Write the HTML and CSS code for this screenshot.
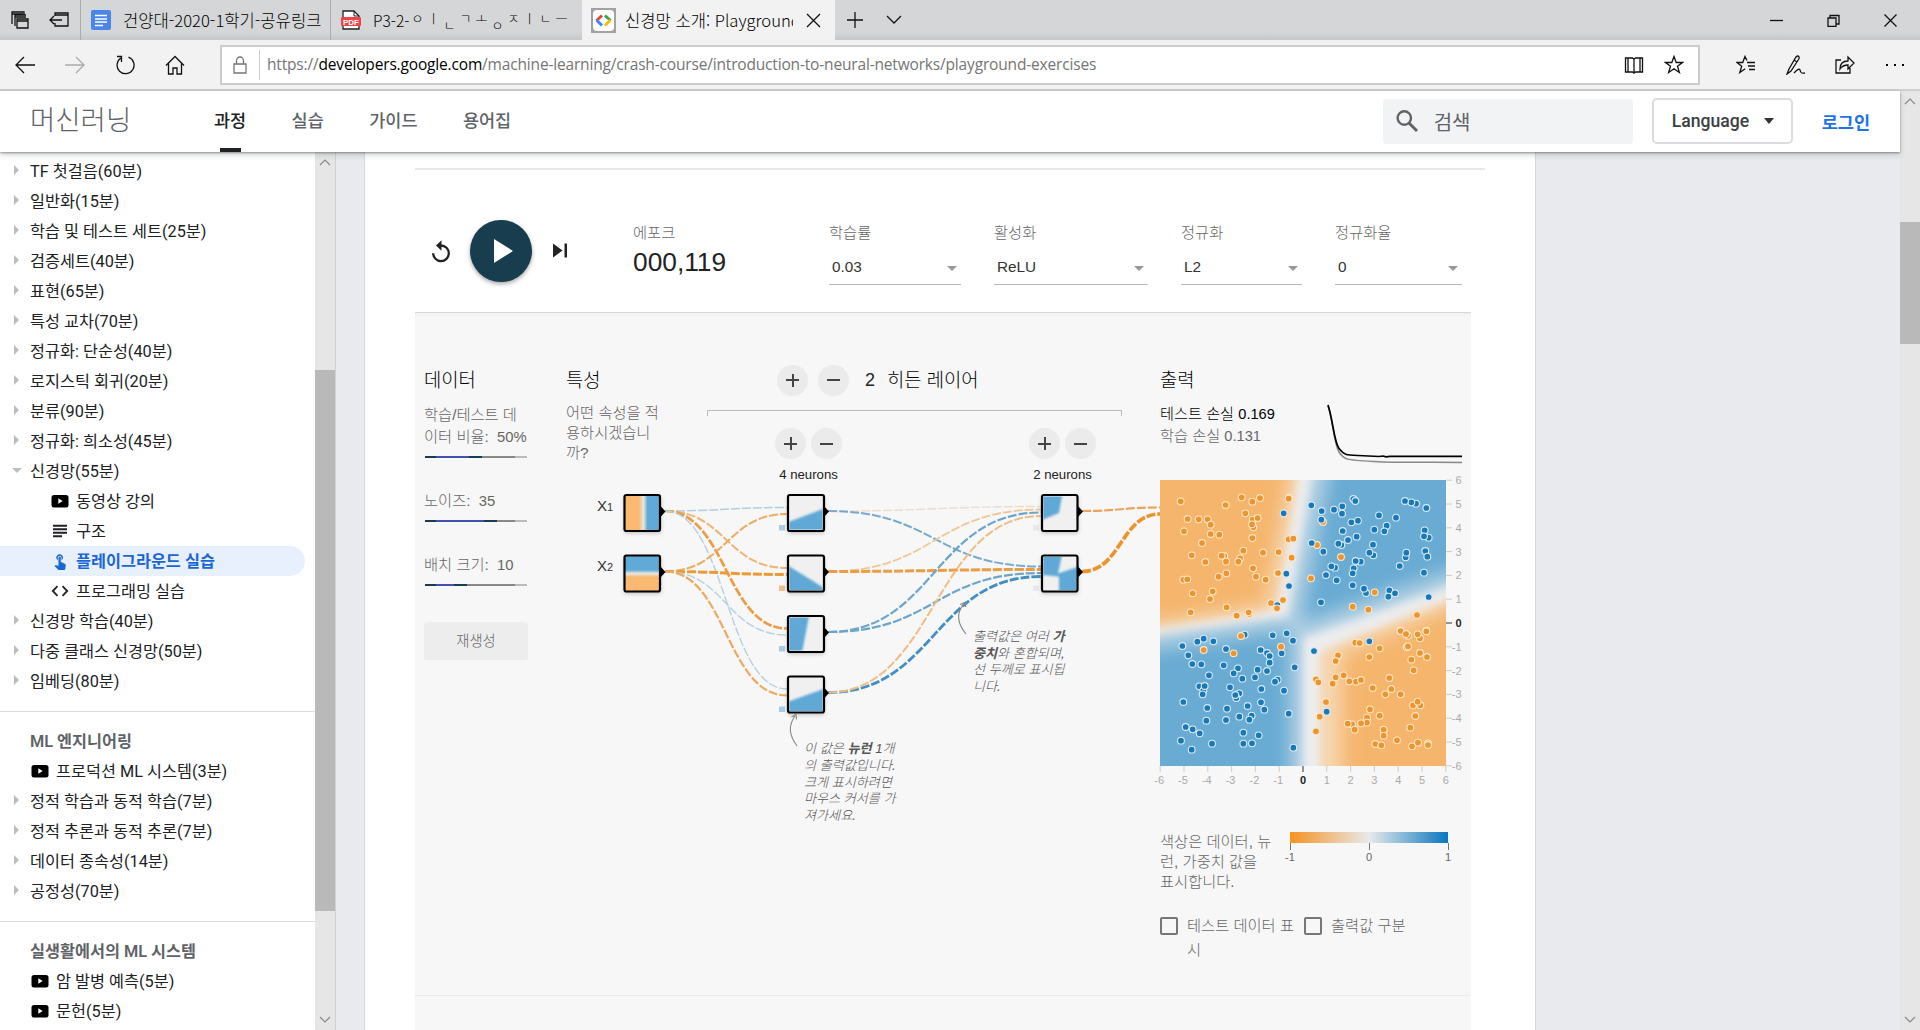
FILE: index.html
```html
<!DOCTYPE html>
<html lang="ko">
<head>
<meta charset="utf-8">
<title>신경망 소개: Playground 실습</title>
<link rel="stylesheet" href="styles.css">
</head>
<body>
<div class="tabbar">
  <div class="tab-tools">
    <svg width="20" height="20" viewBox="0 0 20 20" class="ln"><path d="M2 14V2h12v3M5 16V5h11M7 9h11v9H7zM7 11h11M2 4h11M5 7h11"/></svg>
    <svg width="21" height="20" viewBox="0 0 21 20" class="ln"><path d="M6 6V3h13v13H6v-3M6 5h13M1 10h12M5 6L1 10l4 4"/></svg>
  </div>
  <div class="tab tab-one">
    <svg width="21" height="20" viewBox="0 0 21 20"><rect width="20" height="20" rx="2" fill="#4a86ea"/><path d="M4 5.500h12M4 9h12M4 12h12M4 15.500h8" stroke="#fff" stroke-width="1.7"/></svg>
    <span class="tab-title">건양대-2020-1학기-공유링크</span>
  </div>
  <div class="tab tab-two">
    <svg width="20" height="20" viewBox="0 0 20 20"><path d="M2 19V1h11l5 5v13z" fill="#fff" stroke="#222" stroke-width="1.300"/><path d="M13 1v5h5" fill="none" stroke="#222"/><rect y="7" width="20" height="9" rx="1" fill="#ef4447"/><text x="10" y="14.500" text-anchor="middle" class="pdf">PDF</text></svg>
    <span class="tab-title jamo">P3-2-<i>&#x3147;</i><i>&#x3163;</i><b>&#x3134;</b><i>&#x3131;</i><i>&#x3157;</i><b>&#x3147;</b><i>&#x3148;</i><i>&#x3163;</i><i>&#x3134;</i><i>&#x3161;</i></span>
  </div>
  <div class="tab tab-active">
    <svg width="25" height="25" viewBox="0 0 25 25"><rect width="25" height="25" fill="#a0a2a5"/><rect x="2" y="2" width="21" height="21" rx="4" fill="#fff"/><g fill="none" stroke-width="3"><path d="M11 7.500L5.500 12.500" stroke="#ea4335"/><path d="M5.500 12L11 17.500" stroke="#4285f4"/><path d="M14 7.500l5.500 5" stroke="#34a853"/><path d="M19.500 12L14 17.500" stroke="#fbbc05"/></g></svg>
    <span class="tab-title">신경망 소개: Playground</span>
    <svg width="15" height="15" viewBox="0 0 15 15" class="ln"><path d="M1 1l13 13M14 1L1 14"/></svg>
  </div>
  <div class="tab-new">
    <svg width="16" height="16" viewBox="0 0 16 16" class="ln"><path d="M8 0v16M0 8h16"/></svg>
    <svg width="16" height="10" viewBox="0 0 16 10" class="ln"><path d="M1 1l7 7 7-7"/></svg>
  </div>
  <div class="window-buttons">
    <svg width="13" height="13" viewBox="0 0 13 13" class="ln"><path d="M0 6.500h13"/></svg>
    <svg width="13" height="13" viewBox="0 0 13 13" class="ln"><path d="M1 4h8v8.500H1zM3 4V1.500h9V10H9"/></svg>
    <svg width="13" height="13" viewBox="0 0 13 13" class="ln"><path d="M.5.5l12 12M12.500.5l-12 12"/></svg>
  </div>
</div>
<div class="toolbar">
  <div class="nav-icons">
    <svg width="20" height="18" viewBox="0 0 20 18" class="ln"><path d="M20 9H1M9 1L1 9l8 8"/></svg>
    <svg width="20" height="18" viewBox="0 0 20 18" class="ln faded"><path d="M0 9h19M11 1l8 8-8 8"/></svg>
    <svg width="20" height="20" viewBox="0 0 20 20" class="ln"><path d="M12.500 2.200A8.500 8.500 0 1 1 5 3M5.500 7V1.500H1" transform="translate(1 0)"/></svg>
    <svg width="20" height="20" viewBox="0 0 20 20" class="ln"><path d="M1 10.500L10 1.500l9 9M3.500 8.500V19H8v-6h4v6h4.500V8.500"/></svg>
  </div>
  <div class="address">
    <svg width="14" height="18" viewBox="0 0 14 18" class="ln gray"><path d="M1 8h12v9H1zM3.500 8V5a3.500 4 0 0 1 7 0v3"/></svg>
    <span class="url">https://<em>developers.google.com</em>/machine-learning/crash-course/introduction-to-neural-networks/playground-exercises</span>
    <svg width="20" height="18" viewBox="0 0 20 18" class="ln"><path d="M10 2v14M1.500 2H8.500L10 3.200 11.500 2h7v14h-7L10 17.200 8.500 16h-7zM4 2v14M16 2v14"/></svg>
    <svg width="20" height="19" viewBox="0 0 20 19" class="ln"><path d="M10 1.500l2.200 6h6.300l-5 3.800 1.900 6.200-5.400-3.800-5.400 3.800 1.900-6.200-5-3.800h6.300z"/></svg>
  </div>
  <div class="right-icons">
    <svg width="20" height="19" viewBox="0 0 20 19" class="ln"><path d="M11 7.500h8M12 11h7M13 14.500h6M11 5.500l-2-4-2.300 6H1l4.700 3.800-1.900 6.200 5.400-3.800"/></svg>
    <svg width="20" height="20" viewBox="0 0 20 20" class="ln"><path d="M1 19l2-5L10 2q2-2 3 0 .5 1-.5 2.500L5 16l-4 3zM8 5l3 2M8 18c3-3 5-5 6-3s0 4 5 3"/></svg>
    <svg width="20" height="20" viewBox="0 0 20 20" class="ln"><path d="M6 5H1v13h14v-5M5 14c0-5 3-8 8-8V2l6 6-6 6v-4c-4 0-6 1-8 4z"/></svg>
    <svg width="20" height="4" viewBox="0 0 20 4"><path d="M1 1h2v2H1zM9 1h2v2H9zM17 1h2v2h-2z"/></svg>
  </div>
</div>
<div class="viewport">
  <div class="page">
    <header class="site-header">
      <div class="brand">머신러닝</div>
      <nav class="site-nav"><a class="on">과정</a><a>실습</a><a>가이드</a><a>용어집</a></nav>
      <div class="search"><svg width="24" height="24" viewBox="0 0 24 24"><circle cx="9.300" cy="9" r="6.700" fill="none" stroke="#5f6368" stroke-width="2.400"/><path d="M14 14l8 8" stroke="#5f6368" stroke-width="3"/></svg>검색</div>
      <div class="language">Language<i class="caret"></i></div>
      <a class="login">로그인</a>
    </header>
    <div class="body">
      <aside class="sidebar">
        <div class="toc">
          <ul>
            <li class="item">TF 첫걸음(60분)</li><li class="item">일반화(15분)</li><li class="item">학습 및 테스트 세트(25분)</li><li class="item">검증세트(40분)</li><li class="item">표현(65분)</li><li class="item">특성 교차(70분)</li><li class="item">정규화: 단순성(40분)</li><li class="item">로지스틱 회귀(20분)</li><li class="item">분류(90분)</li><li class="item">정규화: 희소성(45분)</li>
            <li class="item open">신경망(55분)</li>
            <li class="sub"><svg width="18" height="18" viewBox="0 0 18 18"><rect x=".5" y="3" width="17" height="12.500" rx="2.500"/><path d="M7.300 6.300l4.400 2.700-4.400 2.700z" fill="#fff"/></svg>동영상 강의</li>
            <li class="sub"><svg width="18" height="18" viewBox="0 0 18 18"><path d="M2 3.800h14M2 7.300h14M2 10.800h14M2 14.300h9" stroke="#202124" stroke-width="2"/></svg>구조</li>
            <li class="sub current"><svg width="18" height="18" viewBox="0 0 24 24"><path fill="#1967d2" d="M9 11.240V7.500a2.500 2.500 0 0 1 5 0v3.740A4.500 4.500 0 1 0 9 11.240zm9.840 4.630l-4.540-2.260c-.17-.07-.35-.11-.54-.11H13v-6a1.500 1.500 0 0 0-3 0v10.740l-3.430-.72c-.45-.07-.8.1-1.030.31l-.79.800 4.940 4.940c.27.27.65.44 1.060.44h6.790c.75 0 1.330-.55 1.440-1.280l.75-5.270c.1-.66-.28-1.320-.89-1.590z"/></svg>플레이그라운드 실습</li>
            <li class="sub"><svg width="18" height="18" viewBox="0 0 18 18"><path d="M6.500 4.200L1.800 9l4.700 4.800M11.500 4.200L16.200 9l-4.700 4.800" fill="none" stroke="#202124" stroke-width="1.800"/></svg>프로그래밍 실습</li>
            <li class="item">신경망 학습(40분)</li><li class="item">다중 클래스 신경망(50분)</li><li class="item">임베딩(80분)</li>
          </ul>
          <ul>
            <li class="heading">ML 엔지니어링</li>
            <li class="sub video"><svg width="18" height="18" viewBox="0 0 18 18"><rect x=".5" y="3" width="17" height="12.500" rx="2.500"/><path d="M7.300 6.300l4.400 2.700-4.400 2.700z" fill="#fff"/></svg>프로덕션 ML 시스템(3분)</li>
            <li class="item">정적 학습과 동적 학습(7분)</li><li class="item">정적 추론과 동적 추론(7분)</li><li class="item">데이터 종속성(14분)</li><li class="item">공정성(70분)</li>
          </ul>
          <ul>
            <li class="heading">실생활에서의 ML 시스템</li>
            <li class="sub video"><svg width="18" height="18" viewBox="0 0 18 18"><rect x=".5" y="3" width="17" height="12.500" rx="2.500"/><path d="M7.300 6.300l4.400 2.700-4.400 2.700z" fill="#fff"/></svg>암 발병 예측(5분)</li>
            <li class="sub video"><svg width="18" height="18" viewBox="0 0 18 18"><rect x=".5" y="3" width="17" height="12.500" rx="2.500"/><path d="M7.300 6.300l4.400 2.700-4.400 2.700z" fill="#fff"/></svg>문헌(5분)</li>
          </ul>
        </div>
        <div class="scrollbar side-scroll">
          <svg width="12" height="8" viewBox="0 0 12 8"><path d="M1 7l5-5 5 5"/></svg>
          <i class="thumb"></i>
          <svg width="12" height="8" viewBox="0 0 12 8"><path d="M1 1l5 5 5-5"/></svg>
        </div>
      </aside>
      <main class="article">
        <hr class="rule">
        <section class="controls">
          <div class="run-buttons">
            <svg width="20" height="24" viewBox="0 0 20 24"><path d="M2.200 14.200a7.800 7.800 0 1 0 7.800-7.700" fill="none" stroke="#222" stroke-width="2.300"/><path d="M10.500 1.300v10.400L5 6.500z" fill="#222"/></svg>
            <div class="play"><svg width="20" height="26" viewBox="0 0 20 26"><path d="M0 1l19 12L0 25z" fill="#fff"/></svg></div>
            <svg width="15" height="15" viewBox="0 0 15 15"><path d="M0 .5v14L9.500 7.500zM11.500.5h2.500v14h-2.500z" fill="#222"/></svg>
          </div>
          <div class="epoch"><label>에포크</label><span>000,119</span></div>
          <div class="field rate"><label>학습률</label><div class="select">0.03</div></div>
          <div class="field act"><label>활성화</label><div class="select">ReLU</div></div>
          <div class="field reg"><label>정규화</label><div class="select">L2</div></div>
          <div class="field regrate"><label>정규화율</label><div class="select">0</div></div>
        </section>
        <section class="workspace">
          <div class="data-col">
            <h4>데이터</h4>
            <p>학습/테스트 데<br>이터 비율: <span>50%</span></p><div class="slider s50"></div>
            <p>노이즈: <span>35</span></p><div class="slider s35"></div>
            <p>배치 크기: <span>10</span></p><div class="slider s10"></div>
            <div class="regen">재생성</div>
          </div>
          <div class="network">
            <div class="net-head">
              <div class="features"><h4>특성</h4><p>어떤 속성을 적<br>용하시겠습니<br>까?</p></div>
              <div class="hidden-layers">
                <div class="layer-count"><i class="round plus"></i><i class="round"></i><span class="num">2</span><span class="caption">히든 레이어</span></div>
                <div class="bracket"></div>
                <div class="neuron-row">
                  <div class="neurons"><div><i class="round plus"></i><i class="round"></i></div>4 neurons</div>
                  <div class="neurons"><div><i class="round plus"></i><i class="round"></i></div>2 neurons</div>
                </div>
              </div>
            </div>
            <svg class="canvas" width="594" height="360" viewBox="566 485 594 360">
              <defs>
                <clipPath id="cell"><rect x="1.500" y="1.500" width="33" height="33"/></clipPath>
                <filter id="soft" x="-30%" y="-30%" width="160%" height="160%"><feGaussianBlur stdDeviation="1.300"/></filter>
                <filter id="drop" x="-30%" y="-30%" width="160%" height="170%"><feDropShadow dx="0" dy="2" stdDeviation="2" flood-opacity=".25"/></filter>
                <linearGradient id="gx"><stop offset=".4" stop-color="#f9b970"/><stop offset=".53" stop-color="#e8e6e0"/><stop offset=".64" stop-color="#61a9d6"/></linearGradient>
                <linearGradient id="gy" x2="0" y2="1"><stop offset=".4" stop-color="#61a9d6"/><stop offset=".5" stop-color="#e8e6e0"/><stop offset=".6" stop-color="#f9b970"/></linearGradient>
              </defs>
              <g class="links" id="links"></g>
              <g class="biases"><path d="M779 525h6v5.500h-6zM779 646h6v5.500h-6zM779 706.500h6v5.500h-6z" fill="#a9cce3"/><path d="M779 585.500h6v5.500h-6z" fill="#edc08b"/><path d="M1033 525h6v5.500h-6zM1033 585.500h6v5.500h-6z" fill="#e5e8ec"/></g>
              <g id="nodes">
                <g transform="translate(624.500 495)"><rect class="back" width="36" height="36"/><rect width="36" height="36" fill="url(#gx)"/><rect class="frame" width="35.500" height="36" rx="2"/><path d="M36 11l5 5.500-5 5.500z"/></g>
                <g transform="translate(624.500 555.500)"><rect class="back" width="36" height="36"/><rect width="36" height="36" fill="url(#gy)"/><rect class="frame" width="35.500" height="36" rx="2"/><path d="M36 11l5 5.500-5 5.500z"/></g>
                <g transform="translate(788 495)"><rect class="back" width="36" height="36"/><g clip-path="url(#cell)"><path class="blue" d="M-5 29L40 12V42H-5z"/></g><rect class="frame" width="36" height="36" rx="2"/><path d="M36 11l5 5.500-5 5.500z"/></g>
                <g transform="translate(788 555.500)"><rect class="back" width="36" height="36"/><g clip-path="url(#cell)"><path class="blue" d="M-5 7L42 36V42H-5z"/></g><rect class="frame" width="36" height="36" rx="2"/><path d="M36 11l5 5.500-5 5.500z"/></g>
                <g transform="translate(788 616)"><rect class="back" width="36" height="36"/><g clip-path="url(#cell)"><path class="blue" d="M-5-5H22L13 42H-5z"/></g><rect class="frame" width="36" height="36" rx="2"/><path d="M36 11l5 5.500-5 5.500z"/></g>
                <g transform="translate(788 676.500)"><rect class="back" width="36" height="36"/><g clip-path="url(#cell)"><path class="blue" d="M-5 27L40 11V42H-5z"/></g><rect class="frame" width="36" height="36" rx="2"/><path d="M36 11l5 5.500-5 5.500z"/></g>
                <g transform="translate(1042 495)"><rect class="back" width="36" height="36"/><g clip-path="url(#cell)"><path class="blue" d="M-5-5H21L17 18-5 27z"/></g><rect class="frame" width="35.500" height="36" rx="2"/><path d="M36 11l5 5.500-5 5.500z"/></g>
                <g transform="translate(1042 555.500)"><rect class="back" width="36" height="36"/><g clip-path="url(#cell)"><path class="blue" d="M-5-5H21L16 18 40 10V42H17V21L-5 19z"/></g><rect class="frame" width="35.500" height="36" rx="2"/><path d="M36 11l5 5.500-5 5.500z"/></g>
              </g>
              <g class="xlab"><text x="597" y="511">X<tspan class="subn">1</tspan></text><text x="597" y="571">X<tspan class="subn">2</tspan></text></g>
              <g class="pointer"><path d="M966 634C957 623 956 613 964 604M960 604.500l5.500-2.500v5"/><path d="M797 746C789 735 788 726 795 716M791.500 717l4.500-2.500.5 5"/></g>
              <g class="note"><text x="973" y="641">출력값은 여러 <tspan class="hv">가</tspan></text><text x="973" y="657.500"><tspan class="hv">중치</tspan>와 혼합되며,</text><text x="973" y="674">선 두께로 표시됩</text><text x="973" y="690.500">니다.</text>
              <text x="804" y="753">이 값은 <tspan class="hv">뉴런</tspan> 1개</text><text x="804" y="770">의 출력값입니다.</text><text x="804" y="786.500">크게 표시하려면</text><text x="804" y="803">마우스 커서를 가</text><text x="804" y="820">져가세요.</text></g>
            </svg>
          </div>
          <div class="output">
            <h4>출력</h4>
            <div class="loss">
              <div><b>테스트 손실 <span>0.169</span></b><br>학습 손실 <span>0.131</span></div>
              <svg width="138" height="64" viewBox="0 0 138 64"><path d="M4 4C9 18 10 42 15 50S22 58 50 59.500 100 60 138 60.500" fill="none" stroke="#888" stroke-width="1.500"/><path d="M4 3C9 18 10 40 15 46.500S22 53 34 53.500L55 54.500l4-.5 3 .8 4-.5H138" fill="none" stroke="#000" stroke-width="1.700"/></svg>
            </div>
            <svg class="heatmap" width="311" height="310" viewBox="0 0 311 310">
              <defs><clipPath id="plot"><rect width="286" height="286"/></clipPath>
              <filter id="b4" x="-20%" y="-20%" width="140%" height="140%"><feGaussianBlur stdDeviation="4"/></filter><filter id="b10" x="-20%" y="-20%" width="140%" height="140%"><feGaussianBlur stdDeviation="9"/></filter></defs>
              <g clip-path="url(#plot)">
                <rect width="286" height="286" fill="#69abd3"/>
                <g filter="url(#b10)" fill="#c3d9e6" stroke="#b5d2e4" stroke-width="36"><path d="M-40-40H157L124 131-40 156z"/><path d="M330 96L148 160V330H330z"/></g>
                <g filter="url(#b4)" fill="#eeeceb" stroke="#ecedef" stroke-width="14"><path d="M-40-40H151L122 130-40 153z"/><path d="M330 99L150 163V330H330z"/></g>
                <g filter="url(#b4)" fill="#f6d6b0"><path d="M-40-40H142L117 128-40 150z"/><path d="M330 106L160 172V330H330z"/></g>
                <g filter="url(#b10)" fill="#f5b56d"><path d="M-40-40H134L106 124-40 148z"/><path d="M330 112L182 174V330H330z"/></g>
              </g>
              <g id="points" stroke-width="1.100"></g>
              <g id="axes"></g>
            </svg>
            <div class="legend">
              <p>색상은 데이터, 뉴<br>런, 가중치 값을<br>표시합니다.</p>
              <div class="scale"><div class="bar"></div><div class="marks"><span>-1</span><span>0</span><span>1</span></div></div>
            </div>
            <div class="checks"><i></i><p>테스트 데이터 표<br>시</p><i></i><p>출력값 구분</p></div>
          </div>
        </section>
        <div class="below"></div>
      </main>
    </div>
  </div>
  <div class="scrollbar main-scroll">
    <svg width="12" height="8" viewBox="0 0 12 8"><path d="M1 7l5-5 5 5"/></svg>
    <i class="thumb"></i>
    <svg width="12" height="8" viewBox="0 0 12 8"><path d="M1 1l5 5 5-5"/></svg>
  </div>
</div>
<script src="playground.js"></script>
</body>
</html>
```
FILE: styles.css
```css
* { box-sizing: border-box; }
body { margin: 0; width: 1920px; height: 1030px; overflow: hidden; font-family: Roboto, "Noto Sans CJK KR", sans-serif; font-size: 16px; color: #202124; display: flex; flex-direction: column; }
ul { list-style: none; margin: 0; padding: 0; }
h4, p { margin: 0; font-weight: 300; }
svg { display: block; flex: none; }
.ln { fill: none; stroke: #111; stroke-width: 1.3; }
.ln.gray { stroke: #777; }
.ln.faded { stroke: #aaa; }

.tabbar { height: 40px; background: linear-gradient(#d4d6d8 80%, #c5c7c9); display: flex; font-family: "Noto Sans CJK KR", sans-serif; flex: none; }
.tab-tools { width: 81px; display: flex; gap: 19px; padding: 0 0 0 10px; align-items: center; border-right: 1px solid #aaacae; }
.tab { display: flex; align-items: center; overflow: hidden; font-size: 16.6px; padding-left: 10px; }
.tab-title { flex: 1; white-space: nowrap; overflow: hidden; font-weight: 300; color: #000; }
.tab-one { width: 250px; gap: 11px; border-right: 1px solid #aaacae; padding-right: 9px; }
.tab-two { width: 251px; gap: 12px; padding-right: 5px; }
.pdf { font: bold 8px "Liberation Sans", sans-serif; fill: #fff; }
.jamo { font-size: 15.5px; line-height: 34px; }
.jamo i, .jamo b { display: inline-block; width: 16px; text-align: center; font-style: normal; font-weight: 300; font-size: 13px; line-height: 16px; }
.jamo i { vertical-align: 4px; }
.jamo b { vertical-align: -3px; }
.tab-active { width: 253px; background: #f2f2f2; padding: 0 14px 0 9px; gap: 9px; }
.tab-active .tab-title { margin-right: 4px; }
.tab-new { display: flex; align-items: center; gap: 23px; padding-left: 12px; flex: 1; }
.window-buttons { display: flex; align-items: center; gap: 44px; padding-right: 23px; }

.toolbar { height: 51px; background: #f2f2f2; border-bottom: 2px solid #cfcfcf; display: flex; align-items: center; flex: none; }
.nav-icons { width: 220px; display: flex; gap: 30px; padding-left: 15px; align-items: center; }
.address { width: 1480px; height: 40px; border: 2px solid #ccc; background: #fff; display: flex; align-items: center; padding: 0 14px 0 11px; }
.url { flex: 1; height: 30px; line-height: 28px; margin-left: 12px; border-left: 1px solid #ccc; padding-left: 7px; font-family: "Open Sans", sans-serif; font-size: 15.5px; letter-spacing: -0.17px; color: #757575; white-space: nowrap; }
.url em { font-style: normal; color: #000; }
.address svg:last-child { margin-left: 20px; }
.right-icons { display: flex; align-items: center; gap: 29.5px; padding-left: 36px; }

.viewport { flex: 1; display: flex; min-height: 0; }
.page { width: 1900px; display: flex; flex-direction: column; min-height: 0; }
.site-header { height: 61px; flex: none; display: flex; align-items: center; background: #fff; position: relative; z-index: 2; box-shadow: 0 1px 2px rgba(60,64,67,.5), 0 3px 6px rgba(60,64,67,.2); padding: 0 0 1px 30px; }
.brand { width: 184px; font-size: 27.5px; color: #5f6368; font-weight: 300; line-height: 58px; }
.site-nav { flex: 1; display: flex; gap: 45.4px; font-size: 17.5px; font-weight: 500; color: #5f6368; }
.site-nav a { height: 61px; line-height: 60px; margin-bottom: -1px; }
.site-nav .on { color: #202124; background: linear-gradient(#202124, #202124) 6px 57px / 21px 4px no-repeat; }
.search { width: 250px; height: 45px; background: #f1f3f4; border-radius: 4px; display: flex; align-items: center; gap: 15px; padding-left: 12px; font-size: 20px; color: #5f6368; }
.language { width: 141px; height: 46px; border: 2px solid #dadce0; border-radius: 5px; margin-left: 19px; display: flex; align-items: center; padding-left: 18px; font-weight: 500; font-size: 17.6px; color: #3c4043; }
.caret { border: 5px solid transparent; border-top: 6px solid #333; border-bottom: 0; margin-left: 15px; }
.login { color: #1a73e8; font-weight: 600; font-size: 17.5px; margin: 0 30px 0 29px; }

.body { flex: 1; display: flex; background: #e8eaed; min-height: 0; }
.sidebar { width: 336px; display: flex; overflow: hidden; border-right: 1px solid #cfd1d4; }
.toc { width: 315px; background: #fff; padding-top: 4px; height: 878px; overflow: hidden; font-size: 16.3px; }
.toc ul + ul { border-top: 1px solid #dadce0; margin-top: 15px; padding-top: 14px; }
.toc li { height: 30px; line-height: 31px; padding-left: 30px; white-space: nowrap; position: relative; display: flex; align-items: center; }
.item::before { content: ""; position: absolute; left: 14px; top: 9px; border: 5.5px solid transparent; border-left-color: #bdbdbd; border-right: 0; }
.item.open::before { left: 12px; top: 12px; border: 5px solid transparent; border-top-color: #bdbdbd; border-bottom: 0; }
.toc .sub { padding-left: 51px; gap: 7px; }
.toc .video { padding-left: 31px; }
.toc .current { background: #e8f0fe; color: #1967d2; width: 305px; border-radius: 0 15px 15px 0; font-weight: 600; }
.toc .heading { color: #5f6368; font-weight: 600; }
.scrollbar { width: 20px; background: #e6e6e6; display: flex; flex-direction: column; align-items: center; }
.scrollbar path { fill: none; stroke: #888; stroke-width: 1.2; }
.thumb { width: 100%; background: #b9b9b9; }
.side-scroll { padding: 6px 0; }
.side-scroll .thumb { height: 541px; margin: 204px 0 105px; }
.main-scroll { padding: 6px 0; }
.main-scroll .thumb { height: 123px; margin: 117px 0 672px; }

.article { margin-left: 28px; width: 1172px; background: #fff; border: solid #d5d7da; border-width: 0 1px; padding: 16px 50px 0 50px; overflow: hidden; }
.rule { border: 0; height: 2px; background: #e8e8e8; margin: 0; }
.controls { height: 142px; display: flex; padding: 50px 0 0 16px; font-family: "Liberation Sans", "Noto Sans CJK KR", sans-serif; }
.run-buttons { display: flex; align-items: center; height: 61px; width: 202px; gap: 19px; }
.run-buttons > svg:last-child { margin-left: 2px; }
.play { width: 62px; height: 62px; border-radius: 50%; background: #183d4e; display: flex; align-items: center; justify-content: center; padding-left: 5px; box-shadow: 0 2px 4px rgba(0,0,0,.35); }
label { display: block; font-size: 15.3px; line-height: 22px; padding-top: 2px; color: #666; font-weight: 300; }
.epoch { width: 196px; color: #222; }
.epoch span { font-size: 26.3px; line-height: 36px; }
.field { margin-right: 33px; }
.select { height: 41px; line-height: 46px; padding: 0 0 0 3px; border-bottom: 1px solid #bbb; font-size: 15.3px; color: #333; display: flex; justify-content: space-between; }
.select::after { content: ""; border: 5px solid transparent; border-top-color: #999; border-bottom: 0; margin: 22px 4px 0 0; }
.rate { width: 132px; } .act { width: 154px; } .reg { width: 121px; } .regrate { width: 127px; margin: 0; }

.workspace { width: 1056px; height: 683px; background: linear-gradient(#f1f1f1, #f7f7f7 4px); border: solid #d8d8d8; border-width: 1px 0 0; display: flex; font-family: "Liberation Sans", "Noto Sans CJK KR", sans-serif; }
.below { width: 1056px; height: 60px; background: #f7f7f7; border-top: 1px solid #e9e9e9; }
.workspace h4 { font-size: 18.8px; line-height: 30px; padding-top: 53px; color: #000; }
.workspace p { font-size: 15.3px; color: #666; }
.data-col { width: 151px; padding: 0 37px 0 9px; }
.data-col p { line-height: 22px; margin-top: 8px; white-space: nowrap; }
.data-col .slider + p { margin-top: 32px; }
.data-col p span { margin-left: 4px; font-size: 14.8px; }
.slider { width: 102px; height: 2px; margin: 8px 0 0 1px; }
.s50 { background: linear-gradient(90deg, #183d4e 11px, #4350af 11px 44px, #183d4e 44px 57px, #888 57px 90px, #bbb 90px); }
.s35 { background: linear-gradient(90deg, #183d4e 11px, #4350af 11px 59px, #183d4e 59px 72px, #888 72px 90px, #bbb 90px); }
.s10 { background: linear-gradient(90deg, #183d4e 11px, #4350af 11px 29px, #183d4e 29px 42px, #888 42px 90px, #bbb 90px); }
.regen { margin: 36px 0 0; width: 104px; height: 38px; border-radius: 3px; background: #ededed; color: #666; font-size: 14.3px; font-weight: 300; line-height: 38px; text-align: center; }
.network { width: 594px; }
.net-head { height: 172px; display: flex; }
.features { width: 141px; }
.features p { line-height: 20px; margin-top: 7px; white-space: nowrap; }
.hidden-layers { width: 415px; }
.layer-count { display: flex; align-items: center; height: 30px; margin: 52px 0 0 70px; gap: 10px; font-size: 18.8px; font-weight: 300; color: #000; }
.layer-count .num { margin: 0 3px 0 6px; font-size: 18px; font-weight: 400; color: #222; }
.layer-count .caption { padding-bottom: 4px; margin-left: -1px; }
.round { width: 31px; height: 31px; border-radius: 50%; flex: none; background: linear-gradient(#444, #444) center / 13px 2px no-repeat, #ebebeb; }
.round.plus { background: linear-gradient(#444, #444) center / 13px 2px no-repeat, linear-gradient(#444, #444) center / 2px 13px no-repeat, #ebebeb; }
.bracket { height: 6px; margin-top: 15px; border: 1px solid #bbb; border-bottom: 0; }
.neuron-row { display: flex; justify-content: space-between; padding: 12px 26px 0 68px; }
.neurons { font-size: 13.2px; color: #222; text-align: center; line-height: 31px; white-space: nowrap; }
.neurons div { display: flex; gap: 5px; }
.canvas .links path { fill: none; stroke-dasharray: 9 2; }
.back { fill: #f0f0f0; filter: url(#drop); }
.frame { fill: none; stroke: #000; stroke-width: 2.2; }
.blue { fill: #61a9d6; filter: url(#soft); }
.xlab { font-size: 15px; fill: #333; }
.subn { font-size: 11px; }
.pointer { fill: none; stroke: #888; stroke-width: 1.1; }
.note { font-size: 13.1px; font-style: italic; font-weight: 300; fill: #555; }
.hv { font-weight: 600; }
.output { width: 311px; }
.loss { display: flex; justify-content: space-between; height: 72px; font-size: 15.2px; line-height: 22px; color: #666; font-weight: 300; padding-top: 7px; white-space: nowrap; }
.loss b { color: #000; font-weight: 300; }
.loss span { font-size: 14.6px; }
.loss svg { margin-right: 9px; margin-top: -1px; width: 138px; }
.heatmap { margin-top: 12px; font-size: 11px; fill: #aaa; overflow: visible; }
.legend { display: flex; height: 60px; margin-top: 42px; }
.legend p { line-height: 20px; width: 124px; white-space: nowrap; }
.scale { width: 170px; }
.bar { width: 158px; height: 11px; margin-left: 6px; background: linear-gradient(90deg, #f59322, #e8eaeb 50%, #0877bd); }
.marks { display: flex; justify-content: space-between; font-size: 11px; color: #666; }
.marks span { width: 12px; text-align: center; padding-top: 8px; background: linear-gradient(#777, #777) top center / 1px 7px no-repeat; }
.checks { display: flex; margin-top: 22px; width: 311px; }
.checks p { line-height: 24px; font-size: 15.3px; white-space: nowrap; }
.checks i { width: 18px; height: 18px; border: 2px solid #777; border-radius: 2px; margin: 3px 9px 0 0; flex: none; }
.checks p + i { margin-left: 10px; }
```
FILE: playground.js
```js
const NS = "http://www.w3.org/2000/svg";
function add(parent, tag, attrs, text) {
  const el = document.createElementNS(NS, tag);
  for (const k in attrs) el.setAttribute(k, attrs[k]);
  if (text !== undefined) el.textContent = text;
  parent.appendChild(el);
}

// Weighted connections: x0, y0, x1, y1, colour, width
[
  [665, 511, 787, 507.5, "#b0cfe2", 1.5], [665, 511, 787, 568, "#edb473", 2],
  [665, 511, 787, 628.5, "#ec9c42", 2.7], [665, 511, 787, 689, "#b4d0e1", 1.4],
  [665, 571.5, 787, 514, "#edac63", 2.1], [665, 571.5, 787, 574.5, "#ec9936", 3],
  [665, 571.5, 787, 635, "#b4d0e1", 1.4], [665, 571.5, 787, 695.5, "#ecaa60", 2.2],
  [828, 511, 1041, 506.5, "#ecdccb", 1.4], [828, 511, 1041, 566.5, "#78aacd", 2],
  [828, 571.5, 1041, 509.5, "#efc797", 1.8], [828, 571.5, 1041, 569.5, "#ec9c42", 3],
  [828, 632, 1041, 512.5, "#6ca5cb", 2.2], [828, 632, 1041, 573, "#6ca5cb", 2.2],
  [828, 692.5, 1041, 576.5, "#438fc4", 2.8], [828, 692.5, 1041, 516, "#efbd82", 2],
  [1082, 511, 1160, 507.5, "#eba55b", 2.2], [1082, 571.5, 1160, 514, "#ec932b", 3.7]
].forEach(([a, b, c, d, color, w]) => {
  const m = (a + c) / 2;
  add(document.getElementById("links"), "path", { d: `M${a} ${b}C${m} ${b} ${m} ${d} ${c} ${d}`, stroke: color, "stroke-width": w });
});

// Samples grouped by quadrant: offset, then x,y pairs in thirds of a pixel
const O = "#ec9430", B = "#1878b8";
const samples = [
  [-10, -10, O, "92,94 227,105 275,82 330,84 307,95 418,83 416,86 286,130 308,149 323,144 310,172 306,163 113,147 146,148 173,148 182,164 102,184 182,192 208,194 307,204 156,219 416,208 430,206 125,256 223,258 215,257 228,275 166,276 280,242 270,265 265,275 339,248 386,246 425,263 229,310 206,320 309,295 318,320 347,329 382,310 384,309 100,329 112,328 128,370 188,364 180,387 122,427 230,412 260,437 298,432 296,427 363,399 399,390"],
  [-10, -10, B, "401,130 409,311 417,348 382,405"],
  [-10, -10, O, "381,415"],
  [140, -10, O, "69,156 51,225 123,261 33,325 224,367 158,410 205,419 351,435 301,482 379,482"],
  [140, -10, B, "34,106 65,123 64,149 102,119 127,109 126,131 160,87 166,93 154,157 174,152 128,183 144,210 170,200 35,219 124,225 115,221 70,245 237,136 288,143 260,167 253,184 223,179 219,224 220,256 208,248 182,275 167,273 161,295 158,310 105,293 94,289 78,315 110,331 158,346 198,369 192,356 268,361 285,370 265,380 299,288 317,262 319,248 348,101 334,97 315,93 379,114 374,181 386,203 372,199 376,243 382,260 372,308 386,381 63,397"],
  [-10, 145, B, "284,29 368,31 410,25 429,47 97,63 142,50 161,41 190,49 228,72 115,91 127,117 154,118 221,121 332,75 351,84 359,93 359,113 395,85 351,138 323,134 315,157 264,130 251,145 277,161 177,151 434,127 148,184 160,197 164,183 158,208 240,187 268,205 259,219 256,210 334,192 383,164 375,170 402,197 100,231 172,249 231,251 293,243 333,232 343,254 169,287 228,285 268,275 305,272 298,284 416,266 107,306 128,313 149,325 280,323 326,331 93,347 125,374 186,356 280,356 306,355 430,368"],
  [-10, 145, O, "273,33 161,75 251,85 393,65 752,18 774,32 768,27 829,19 810,40 803,28 616,53 629,54 689,70 770,66 774,64 810,84 831,96 658,96 564,91 557,108 784,104 791,136 498,163 505,172 557,157 581,151 548,176 598,169 618,170 633,165 718,159 668,189 724,192 706,208 752,208 528,231 509,275 498,319 660,253 689,272 651,278 651,293 633,295 606,298 593,296 614,314 701,314 701,332 789,241 811,241 803,230 796,273 781,308 676,357 694,361 741,346 786,364 804,353 834,355 834,360"],
  [-10, 145, B, "658,49 492,78 530,260"]
];
samples.forEach(([ox, oy, fill, list]) => list.split(" ").forEach(p => {
  const [x, y] = p.split(",").map(Number);
  add(document.getElementById("points"), "circle", { cx: ox + x / 3, cy: oy + y / 3, r: 3.4, fill, stroke: fill === O ? "#fde8c8" : "#dcecf5" });
}));

const axes = document.getElementById("axes");
for (let v = -6; v <= 6; v++) {
  const p = 143 + v * 23.8, q = 143 - v * 23.8;
  const style = v ? {} : { fill: "#222", "font-weight": "bold" };
  const stroke = v ? "#ccc" : "#333";
  add(axes, "path", { d: `M${p} 286v6`, stroke });
  add(axes, "path", { d: `M286 ${q}h6`, stroke });
  add(axes, "text", { x: v < 0 ? p - 1 : p, y: 304, "text-anchor": "middle", ...style }, v);
  add(axes, "text", { x: 301.5, y: q + 4, "text-anchor": "end", ...style }, v);
}
```
